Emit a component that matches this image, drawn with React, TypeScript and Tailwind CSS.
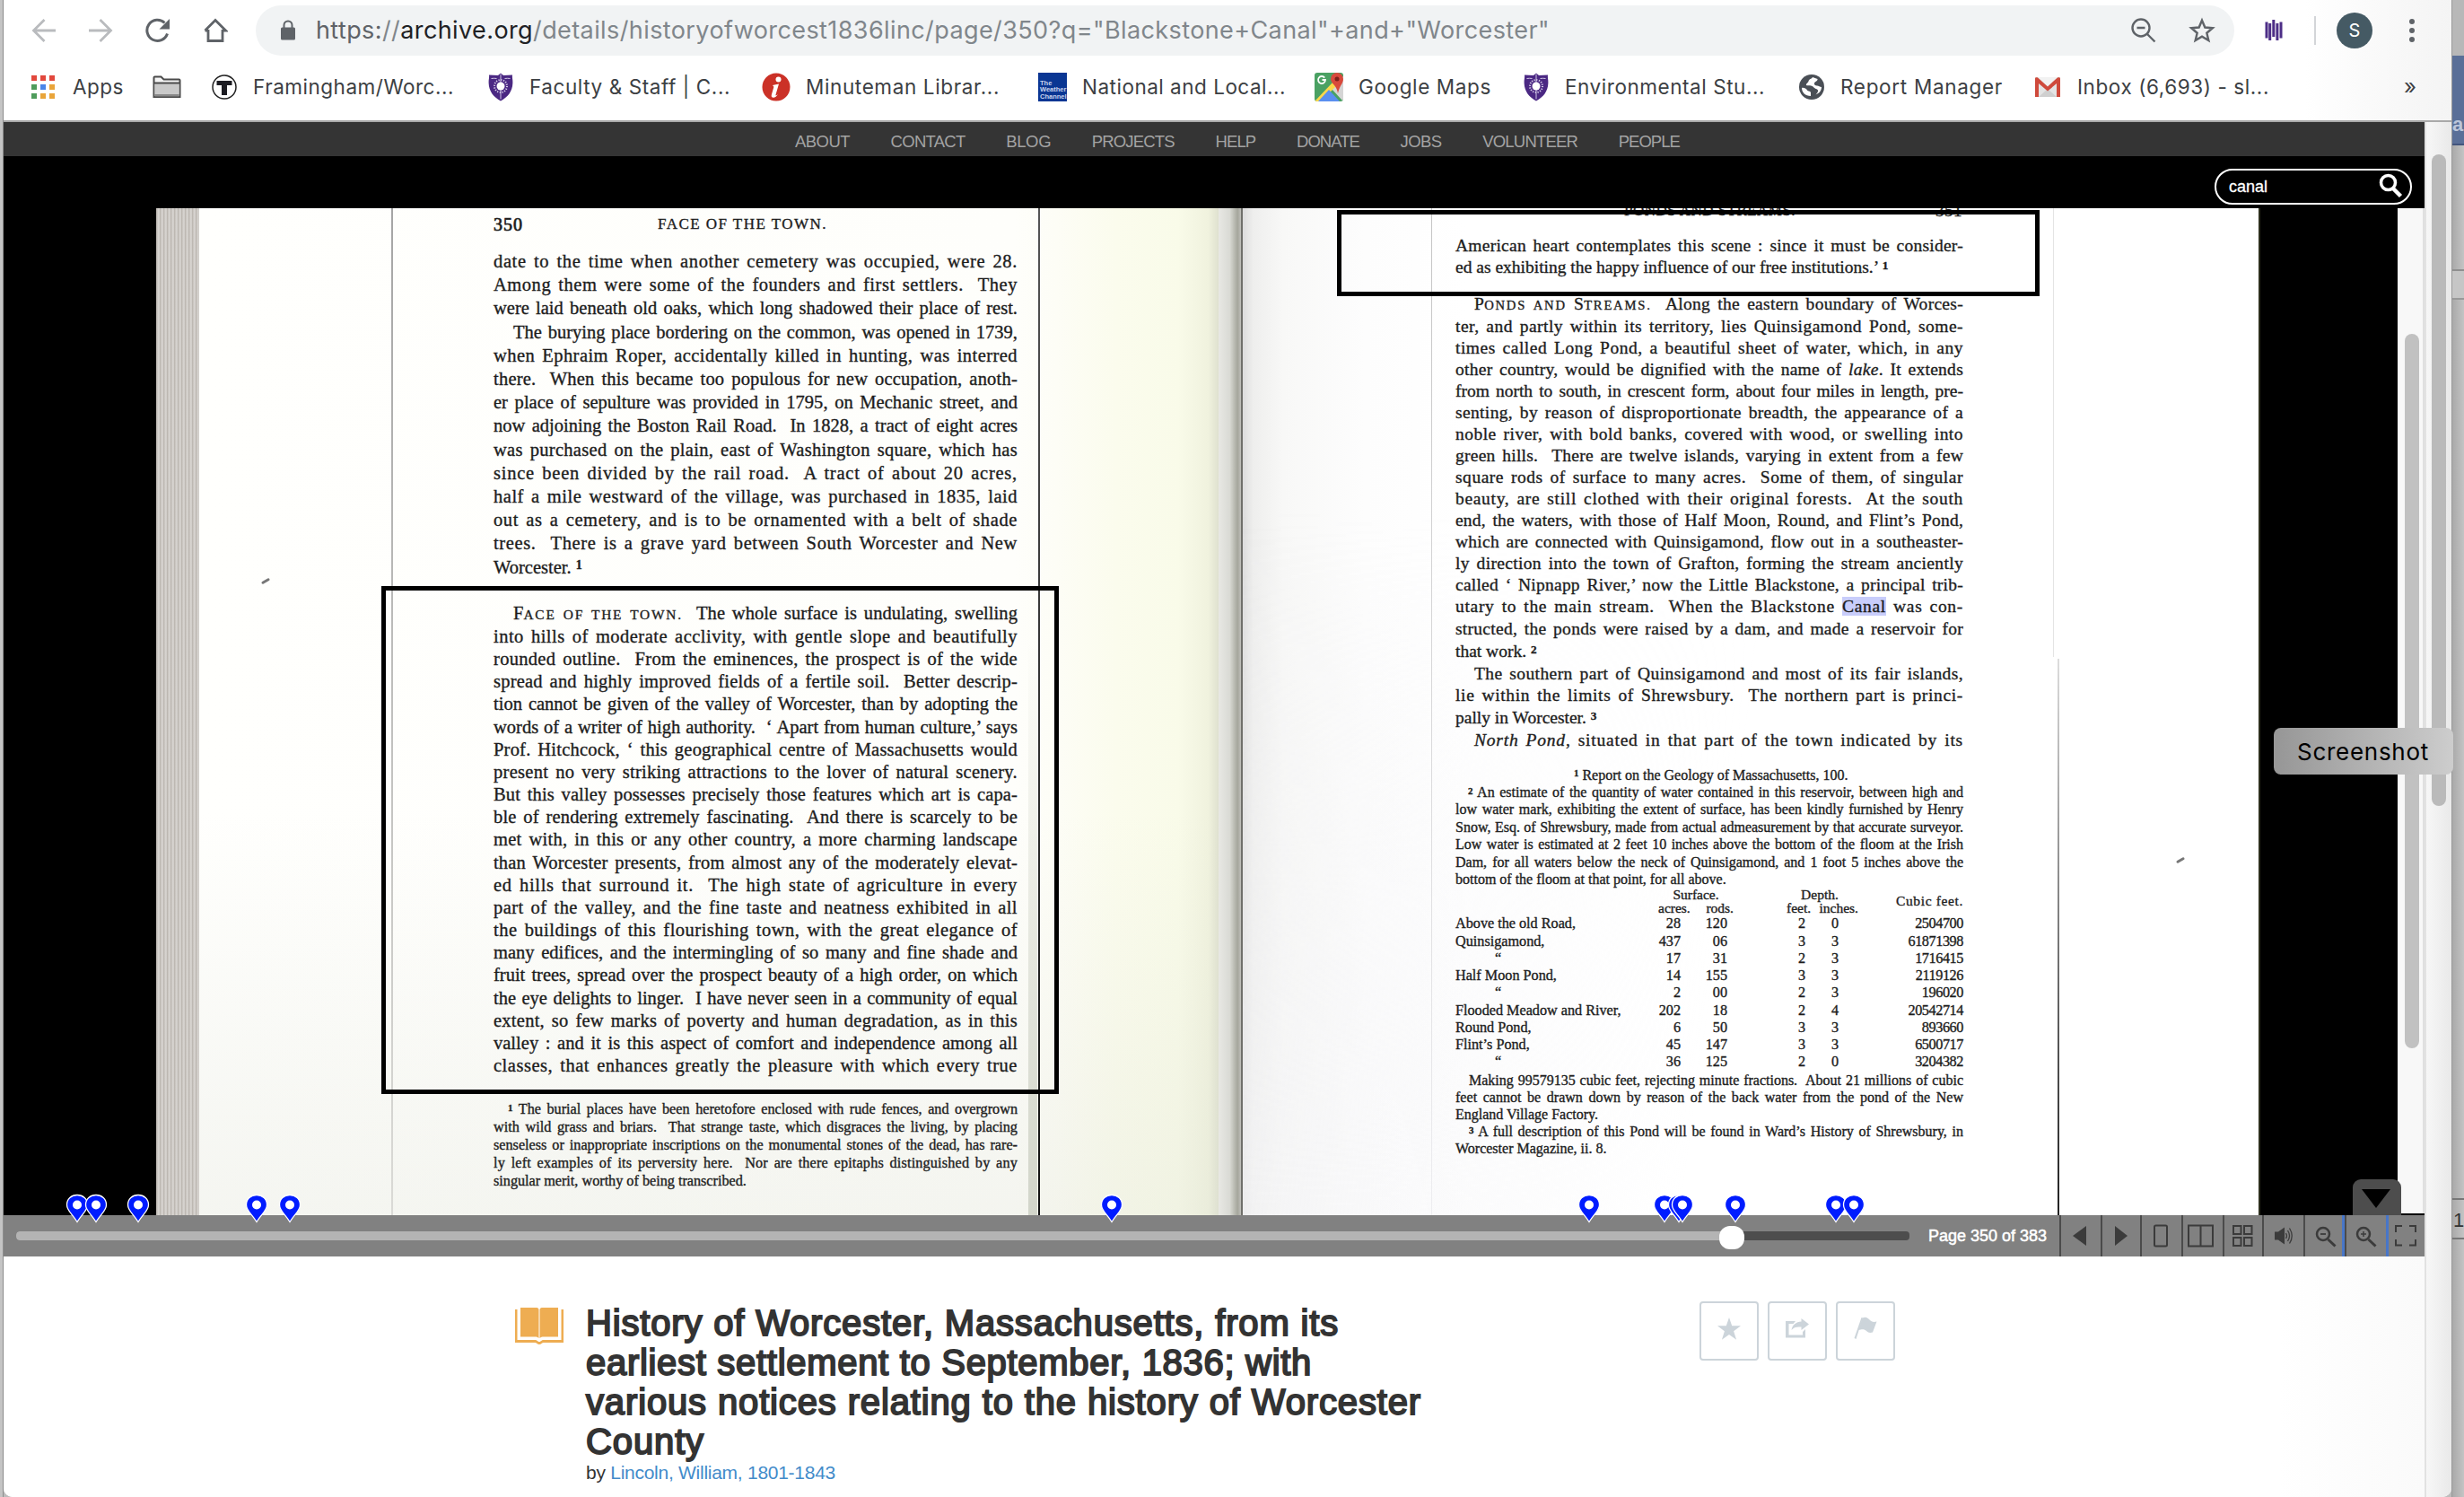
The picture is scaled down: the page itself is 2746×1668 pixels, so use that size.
import { useLayoutEffect, useRef } from "react";
import type { ReactNode } from "react";
import clsx from "clsx";

/* Text whose tracking is adjusted so that it fills a given width. */
function Fit({ w, className, children }: { w: number; className?: string; children: ReactNode }) {
  const ref = useRef<HTMLSpanElement>(null);
  useLayoutEffect(() => {
    const el = ref.current;
    if (!el) return;
    el.style.letterSpacing = "0px";
    const natural = el.getBoundingClientRect().width;
    const n = (el.textContent || "").length;
    el.style.letterSpacing = `${(w - natural) / n}px`;
  });
  return (
    <span className={clsx("inline-block whitespace-pre", className)} ref={ref}>
      {children}
    </span>
  );
}

/* One line of letterpress text, justified to its column. */
function Line({ children, indent = 0, ragged = false }: { children: ReactNode; indent?: number; ragged?: boolean }) {
  const box = useRef<HTMLDivElement>(null);
  const txt = useRef<HTMLSpanElement>(null);
  useLayoutEffect(() => {
    const b = box.current;
    const t = txt.current;
    if (!b || !t || ragged) return;
    b.style.textAlignLast = "left";
    t.style.letterSpacing = "0px";
    const natural = t.getBoundingClientRect().width;
    const width = b.clientWidth - indent;
    const s = t.textContent || "";
    const gaps = (s.match(/[ \u00a0]/g) || []).length;
    const extra = width - natural;
    const ls = extra < 0 ? extra / s.length - 0.01 : Math.min(0.8, Math.max(0, (extra - gaps * 2.5) / s.length));
    t.style.letterSpacing = `${ls}px`;
    b.style.textAlignLast = "justify";
  });
  return (
    <div ref={box} className="w-full whitespace-nowrap text-justify" style={{ paddingLeft: indent }}>
      <span ref={txt}>{children}</span>
    </div>
  );
}

type L = [ReactNode, number?, boolean?];
const Lines = ({ lines }: { lines: L[] }) => (
  <>
    {lines.map((l, i) => (
      <Line key={i} indent={l[1]} ragged={l[2]}>
        {l[0]}
      </Line>
    ))}
  </>
);

const G = "\u00a0 ";

const cemetery: L[] = [
  ["date to the time when another cemetery was occupied, were 28."],
  [`Among them were some of the founders and first settlers.${G}They`],
  ["were laid beneath old oaks, which long shadowed their place of rest."],
  ["The burying place bordering on the common, was opened in 1739,", 22],
  ["when Ephraim Roper, accidentally killed in hunting, was interred"],
  [`there.${G}When this became too populous for new occupation, anoth-`],
  ["er place of sepulture was provided in 1795, on Mechanic street, and"],
  [`now adjoining the Boston Rail Road.${G}In 1828, a tract of eight acres`],
  ["was purchased on the plain, east of Washington square, which has"],
  [`since been divided by the rail road.${G}A tract of about 20 acres,`],
  ["half a mile westward of the village, was purchased in 1835, laid"],
  ["out as a cemetery, and is to be ornamented with a belt of shade"],
  [`trees.${G}There is a grave yard between South Worcester and New`],
  [<>Worcester. <Sup>1</Sup></>, 0, true],
];

const faceOfTown: L[] = [
  [<>F<Cap>ACE OF THE TOWN.</Cap>{G}The whole surface is undulating, swelling</>, 22],
  ["into hills of moderate acclivity, with gentle slope and beautifully"],
  [`rounded outline.${G}From the eminences, the prospect is of the wide`],
  [`spread and highly improved fields of a fertile soil.${G}Better descrip-`],
  ["tion cannot be given of the valley of Worcester, than by adopting the"],
  [`words of a writer of high authority.${G}‘ Apart from human culture,’ says`],
  ["Prof. Hitchcock, ‘ this geographical centre of Massachusetts would"],
  ["present no very striking attractions to the lover of natural scenery."],
  ["But this valley possesses precisely those features which art is capa-"],
  [`ble of rendering extremely fascinating.${G}And there is scarcely to be`],
  ["met with, in this or any other country, a more charming landscape"],
  ["than Worcester presents, from almost any of the moderately elevat-"],
  [`ed hills that surround it.${G}The high state of agriculture in every`],
  ["part of the valley, and the fine taste and neatness exhibited in all"],
  ["the buildings of this flourishing town, with the great elegance of"],
  ["many edifices, and the intermingling of so many and fine shade and"],
  ["fruit trees, spread over the prospect beauty of a high order, on which"],
  [`the eye delights to linger.${G}I have never seen in a community of equal`],
  ["extent, so few marks of poverty and human degradation, as in this"],
  ["valley : and it is this aspect of comfort and independence among all"],
  ["classes, that enhances greatly the pleasure with which every true"],
];

const leftNote: L[] = [
  [<><Sup>1</Sup> The burial places have been heretofore enclosed with rude fences, and overgrown</>, 16],
  [`with wild grass and briars.${G}That strange taste, which disgraces the living, by placing`],
  ["senseless or inappropriate inscriptions on the monumental stones of the dead, has rare-"],
  [`ly left examples of its perversity here.${G}Nor are there epitaphs distinguished by any`],
  ["singular merit, worthy of being transcribed.", 0, true],
];

const heart: L[] = [
  ["American heart contemplates this scene : since it must be consider-"],
  [<>ed as exhibiting the happy influence of our free institutions.’ <Sup>1</Sup></>, 0, true],
];

const ponds: L[] = [
  [<>P<Cap>ONDS AND</Cap> S<Cap>TREAMS.</Cap>{G}Along the eastern boundary of Worces-</>, 21],
  ["ter, and partly within its territory, lies Quinsigamond Pond, some-"],
  ["times called Long Pond, a beautiful sheet of water, which, in any"],
  [<>other country, would be dignified with the name of <i>lake</i>. It extends</>],
  ["from north to south, in crescent form, about four miles in length, pre-"],
  ["senting, by reason of disproportionate breadth, the appearance of a"],
  ["noble river, with bold banks, covered with wood, or swelling into"],
  [`green hills.${G}There are twelve islands, varying in extent from a few`],
  [`square rods of surface to many acres.${G}Some of them, of singular`],
  [`beauty, are still clothed with their original forests.${G}At the south`],
  ["end, the waters, with those of Half Moon, Round, and Flint’s Pond,"],
  ["which are connected with Quinsigamond, flow out in a southeaster-"],
  ["ly direction into the town of Grafton, forming the stream anciently"],
  ["called ‘ Nipnapp River,’ now the Little Blackstone, a principal trib-"],
  [<>utary to the main stream.{G}When the Blackstone <span className="bg-[#c8cdfb]">Canal</span> was con-</>],
];

const pondsEnd: L[] = [
  ["structed, the ponds were raised by a dam, and made a reservoir for"],
  [<>that work. <Sup>2</Sup></>, 0, true],
  ["The southern part of Quinsigamond and most of its fair islands,", 21],
  [`lie within the limits of Shrewsbury.${G}The northern part is princi-`],
  [<>pally in Worcester. <Sup>3</Sup></>, 0, true],
  [<><i>North Pond</i>, situated in that part of the town indicated by its</>, 21],
];

const rightNote: L[] = [
  [<><Sup>1</Sup> Report on the Geology of Massachusetts, 100.</>, 132, true],
  [<><Sup>2</Sup> An estimate of the quantity of water contained in this reservoir, between high and</>, 14],
  ["low water mark, exhibiting the extent of surface, has been kindly furnished by Henry"],
  ["Snow, Esq. of Shrewsbury, made from actual admeasurement by that accurate surveyor."],
  ["Low water is estimated at 2 feet 10 inches above the bottom of the floom at the Irish"],
  ["Dam, for all waters below the neck of Quinsigamond, and 1 foot 5 inches above the"],
  ["bottom of the floom at that point, for all above.", 0, true],
];

const rightEnd: L[] = [
  [`Making 99579135 cubic feet, rejecting minute fractions.${G}About 21 millions of cubic`, 15],
  ["feet cannot be drawn down by reason of the back water from the pond of the New"],
  ["England Village Factory.", 0, true],
  [<><Sup>3</Sup> A full description of this Pond will be found in Ward’s History of Shrewsbury, in</>, 15],
  ["Worcester Magazine, ii. 8.", 0, true],
];

const table = [
  ["Above the old Road,", "28", "120", "2", "0", "2504700"],
  ["Quinsigamond,", "437", "06", "3", "3", "61871398"],
  ["“", "17", "31", "2", "3", "1716415"],
  ["Half Moon Pond,", "14", "155", "3", "3", "2119126"],
  ["“", "2", "00", "2", "3", "196020"],
  ["Flooded Meadow and River,", "202", "18", "2", "4", "20542714"],
  ["Round Pond,", "6", "50", "3", "3", "893660"],
  ["Flint’s Pond,", "45", "147", "3", "3", "6500717"],
  ["“", "36", "125", "2", "0", "3204382"],
];

function Sup({ children }: { children: ReactNode }) {
  return <span className="relative -top-[0.3em] text-[0.68em] font-bold leading-none">{children}</span>;
}
function Cap({ children }: { children: ReactNode }) {
  return <span className="text-[0.75em] tracking-[1.8px]">{children}</span>;
}

function LeftPage() {
  return (
    <div className="relative h-full w-[1136px] shrink-0 overflow-hidden bg-[linear-gradient(90deg,#fffffd_0%,#fefefb_80%,#fdfdf6_84%,#fbfced_90%,#f9fbe9_96%,#f0f2de_99%,#dfe1cf_100%)]">
      <div className="absolute inset-0 bg-linear-to-b from-transparent from-60% to-[#dcdfd4]/30" />
      <div className="absolute left-[214px] top-0 h-full w-[2px] bg-linear-to-b from-[#a5a5a5] to-[#dadad6]" />
      <div className="absolute left-[935px] top-0 h-full w-[2px] bg-linear-to-b from-[#555] to-[#111]" />
      <div className="absolute bottom-0 left-[924px] h-[640px] w-[10px] bg-linear-to-b from-transparent to-[#d2d5ca]" />
      <div className="absolute left-[69px] top-[414px] h-[3px] w-[10px] -rotate-30 rounded-full bg-[#777]" />
      <div className="absolute left-[203px] top-[421px] z-10 h-[566px] w-[755px] border-[5px] border-black" />
      <div className="relative ml-[328px] flex w-[584px] flex-col">
        <div className="flex pt-[6px] leading-[24px]">
          <Fit w={33} className="text-[20px] [-webkit-text-stroke:0.7px_#1d1d1d]">350</Fit>
          <Fit w={189} className="ml-[150px] text-[17px]">FACE OF THE TOWN.</Fit>
        </div>
        <div className="mt-[16px] text-[20.500px] leading-[26.2px]"><Lines lines={cemetery} /></div>
        <div className="mt-[26px] text-[20.500px] leading-[25.16px]"><Lines lines={faceOfTown} /></div>
        <div className="mt-[26px] text-[16.200px] leading-[20px]"><Lines lines={leftNote} /></div>
      </div>
    </div>
  );
}

function RightPage() {
  return (
    <div className="relative h-full w-[1134px] shrink-0 overflow-hidden border-r-2 border-[#2b2d1c] bg-[linear-gradient(90deg,#dcdcdc_0%,#eeeeed_1%,#f8f8f7_4%,#fdfdfd_12%,#ffffff_22%)]">
      <div className="absolute inset-0 bg-[linear-gradient(98deg,rgba(222,222,224,.9),rgba(242,242,243,.8)_6%,rgba(246,246,248,.6)_24%,rgba(255,255,255,0)_50%)] [mask-image:linear-gradient(180deg,transparent_30%,black)]" />
      <div className="absolute left-[210px] top-0 h-full w-[1px] bg-linear-to-b from-[#c4c4c4] to-[#ededf0]" />
      <div className="absolute left-[903px] top-0 h-[500px] w-[1px] bg-[#e4e4e4]" />
      <div className="absolute bottom-0 left-[908px] h-[620px] w-[2px] bg-linear-to-b from-[#ddd] to-[#222]" />
      <div className="absolute left-[1040px] top-[725px] h-[3px] w-[10px] -rotate-30 rounded-full bg-[#777]" />
      <div className="absolute left-[105px] top-[2px] z-10 h-[96px] w-[783px] border-[5px] border-black" />
      <div className="relative ml-[237px] flex w-[566px] flex-col">
        <div className="-mt-[9px] flex leading-[24px]">
          <Fit w={191} className="ml-[188px] text-[17px]">PONDS AND STREAMS.</Fit>
          <Fit w={30} className="ml-[156px] text-[19px]">351</Fit>
        </div>
        <div className="mt-[15px] text-[19.500px] leading-[24.3px]"><Lines lines={heart} /></div>
        <div className="mt-[16px] text-[19.500px] leading-[24.05px]"><Lines lines={ponds} /></div>
        <div className="mt-[1px] text-[19.500px] leading-[24.7px]"><Lines lines={pondsEnd} /></div>
        <div className="mt-[16px] text-[16px] leading-[19.4px]"><Lines lines={rightNote} /></div>
        <div className="flex h-[31px] text-[15.500px] leading-[15px]">
          <div className="ml-[226px] w-[84px] text-center"><div>Surface.</div><div className="flex justify-between"><span>acres.</span><span>rods.</span></div></div>
          <div className="ml-[59px] w-[80px] text-center"><div className="pr-[6px]">Depth.</div><div className="flex justify-between"><span>feet.</span><span>inches.</span></div></div>
          <div className="grow pt-[7px] text-right"><Fit w={75}>Cubic feet.</Fit></div>
        </div>
        <div className="text-[16.200px] leading-[19.27px]">
          {table.map((r, i) => (
            <div key={i} className="flex whitespace-nowrap">
              <span className={clsx("w-[190px]", r[0] === "“" && "pl-[44px]")}>{r[0]}</span>
              <span className="w-[61px] text-right">{r[1]}</span>
              <span className="w-[52px] text-right">{r[2]}</span>
              <span className="w-[87px] text-right">{r[3]}</span>
              <span className="w-[37px] text-right">{r[4]}</span>
              <span className="grow text-right tracking-[-0.400px]">{r[5]}</span>
            </div>
          ))}
        </div>
        <div className="text-[16px] leading-[19px]"><Lines lines={rightEnd} /></div>
      </div>
    </div>
  );
}

const Shield = () => (
  <svg width="28" height="32" viewBox="0 0 28 32">
    <path d="M14 .5 17 3l10-.5c-.5 3 .6 5 .4 9C27 21 22 27 14 31.500 6 27 1 21 .6 11.500.4 7.500 1.500 5.500 1 2.500L11 3z" fill="#4b2883" />
    <path d="M14 1.500v28" stroke="#cfc4e4" strokeWidth="1" />
    <path d="M3.500 6.500q3-.5 6 0M18.500 6.500q3-.5 6 0" stroke="#cfc4e4" strokeWidth="1" fill="none" />
    <circle cx="14" cy="15" r="7" fill="none" stroke="#d9d0ea" strokeWidth="2" strokeDasharray="1.200 1.550" />
    <circle cx="14" cy="15" r="4.500" fill="#fff" />
  </svg>
);

const bookmarks: { icon: ReactNode; iw: number; gap: number; label: string; w: number; after: number }[] = [
  {
    icon: (
      <svg width="28" height="28" viewBox="0 0 28 28">
        <circle cx="14" cy="14" r="13" fill="#fff" stroke="#222" strokeWidth="1.500" />
        <path d="M5.500 7h17v5H17v11h-6V12H5.500z" fill="#1c1c22" />
      </svg>
    ), iw: 28, gap: 18, label: "Framingham/Worc...", w: 224, after: 38,
  },
  { icon: <Shield />, iw: 28, gap: 18, label: "Faculty & Staff | C...", w: 224, after: 35 },
  {
    icon: (
      <svg width="32" height="32" viewBox="0 0 32 32">
        <circle cx="16" cy="16" r="15.500" fill="#cb3127" />
        <circle cx="18.500" cy="7.500" r="3" fill="#fff" />
        <path d="m12 14 7-1.500-3.500 12c-.3 1.500.8 1 2.500-.7-1.500 3-3.500 4.200-5.500 4-2-.3-2-2-1.500-3.800l2.400-8.300z" fill="#fff" />
      </svg>
    ), iw: 32, gap: 17, label: "Minuteman Librar...", w: 216, after: 43,
  },
  {
    icon: (
      <div className="flex h-8 w-8 flex-col justify-end bg-[#0a3693] pb-[2px] pl-[2px] font-['Liberation_Sans'] text-[7.500px] font-bold leading-[7.500px] text-[#c9d4ee]">
        <span>The</span><span>Weather</span><span>Channel</span>
      </div>
    ), iw: 32, gap: 17, label: "National and Local...", w: 227, after: 32,
  },
  {
    icon: (
      <svg width="32" height="32" viewBox="0 0 32 32">
        <defs><clipPath id="gm"><rect width="32" height="32" rx="3" /></clipPath></defs>
        <g clipPath="url(#gm)">
          <path d="M0 0h32v32H0z" fill="#4aa163" />
          <path d="M32 4v28L18 17z" fill="#d5d5d5" />
          <path d="M0 32 20 11l4 4L7 32z" fill="#fbd84b" />
          <path d="M4 32 16 19l12 13z" fill="#5a8ff0" />
          <path d="M18 7a7 7 0 0 1 14 0c0 5-4 7-6 16-1-9-8-11-8-16z" fill="#d8493c" />
        </g>
        <circle cx="25" cy="7" r="2.500" fill="#7c211a" />
        <path d="M11.200 5.600a4 4 0 1 0 .8 2.400H8.500" fill="none" stroke="#fff" strokeWidth="1.800" />
      </svg>
    ), iw: 32, gap: 17, label: "Google Maps", w: 148, after: 36,
  },
  { icon: <Shield />, iw: 28, gap: 18, label: "Environmental Stu...", w: 223, after: 38 },
  {
    icon: (
      <svg width="28" height="28" viewBox="0 0 28 28">
        <circle cx="14" cy="14" r="14" fill="#4a4f56" />
        <path d="M3 15c2-.5 5 .5 6 2.500 1 1.500 4 .5 4 3v3.500C7 24 3 20 3 15zM15 3c-1 2-4 2-4.500 4.500C10 9.500 7.500 10 8 12c2 1 6-.5 8 2s4 1.500 5 3.500c.5 1.500-1 3.500-2.500 5 4-1.500 6.500-4.500 6.500-8.500-2 0-3-1.500-5-1.500s-3.500-1-3-3c.5-1.500 3-2 3.500-3.500V5z" fill="#fff" />
      </svg>
    ), iw: 28, gap: 18, label: "Report Manager", w: 181, after: 36,
  },
  {
    icon: (
      <svg width="28" height="22" viewBox="0 0 28 22">
        <path d="M0 0h28v22H0z" fill="#e4e4e4" />
        <path d="m4 22 10-9 10 9z" fill="#cfcfcf" />
        <path d="M3 0h22L14 10z" fill="#f2f2f2" />
        <path d="M0 1.500V22h4V7l10 8.500L24 7v15h4V1.500C28 0 26 0 25 .5L14 10.500 3 .5C2 0 0 0 0 1.500z" fill="#cf4a3c" />
      </svg>
    ), iw: 28, gap: 19, label: "Inbox (6,693) - sl...", w: 214, after: 0,
  },
];

function Chrome() {
  return (
    <div className="flex h-[136px] shrink-0 flex-col border-b-2 border-[#a9a9a9] bg-[linear-gradient(90deg,#fff_94%,#f4f4f4_100%)] font-[Inter]">
      <div className="flex h-[62px] items-center pl-[31px] pt-[6px]">
        <svg width="28" height="28" viewBox="0 0 28 28" fill="none" stroke="#b9bbbe" strokeWidth="2.800"><path d="M27 14H3M14.500 2 2.500 14l12 12" /></svg>
        <svg className="ml-[35px]" width="28" height="28" viewBox="0 0 28 28" fill="none" stroke="#b9bbbe" strokeWidth="2.800"><path d="M1 14h24M13.500 2l12 12-12 12" /></svg>
        <svg className="ml-[35px]" width="30" height="28" viewBox="0 0 30 28"><path d="M25.500 17.500A11.600 11.600 0 1 1 22.500 5.500" fill="none" stroke="#5f6368" strokeWidth="3" /><path d="M28 1v11.500H16.500z" fill="#5f6368" /></svg>
        <svg className="ml-[35px]" width="28" height="28" viewBox="0 0 28 28" fill="none" stroke="#5f6368" strokeWidth="2.800"><path d="M6 13v12.500h16V13M2.500 14 14 2.500 25.500 14H22M2.500 14H6" /></svg>
        <div className="ml-[31px] flex h-[56px] w-[2205px] items-center rounded-full bg-[#f1f3f4] pl-[27px] pr-[20px]">
          <svg width="18" height="24" viewBox="0 0 18 24"><rect x="1" y="8.500" width="16" height="14" rx="1.500" fill="#5f6368" /><path d="M4.500 9V6a4.500 4.500 0 0 1 9 0v3" fill="none" stroke="#5f6368" strokeWidth="2" /></svg>
          <Fit w={1375} className="ml-[22px] text-[27px] leading-[40px] text-[#80868b]"><span className="text-[#5f6368]">https:</span>//<span className="text-[#202124]">archive.org</span>/details/historyofworcest1836linc/page/350?q="Blackstone+Canal"+and+"Worcester"</Fit>
          <svg className="ml-auto" width="30" height="30" viewBox="0 0 30 30" fill="none" stroke="#5f6368" strokeWidth="2.400"><circle cx="12" cy="12" r="9.500" /><path d="M7.500 12h9M19 19l8.500 8.500" /></svg>
          <svg className="ml-[34px]" width="32" height="32" viewBox="0 0 24 24" fill="none" stroke="#5f6368" strokeWidth="1.800"><path d="m12 3.500 2.500 5.900 6.400.5-4.900 4.200 1.500 6.200L12 17l-5.500 3.300L8 14.100 3.100 9.900l6.400-.5z" /></svg>
        </div>
        <svg className="ml-[34px]" width="20" height="24" viewBox="0 0 20 24" stroke="#4d2e87" strokeWidth="3"><path d="M2 2.500v18M5.700 4v19M9.800 0v19M13.900 4v19M18 2.500v18" /></svg>
        <div className="ml-[35px] h-[32px] w-[2px] bg-[#d3d5d8]" />
        <div className="ml-[23px] flex h-[40px] w-[40px] items-center justify-center rounded-full bg-[#455a64] text-[20px] text-white">S</div>
        <div className="ml-[40px] flex flex-col gap-1 pl-[1px]">
          <div className="h-[6px] w-[6px] rounded-full bg-[#5f6368]" /><div className="h-[6px] w-[6px] rounded-full bg-[#5f6368]" /><div className="h-[6px] w-[6px] rounded-full bg-[#5f6368]" />
        </div>
      </div>
      <div className="flex h-[70px] items-center pl-[31px] text-[22.500px] leading-[32px] text-[#3c4043]">
        <div className="grid grid-cols-[6px_6px_6px] gap-[4px]">
          {["bg-[#e2483d]", "bg-[#e2483d]", "bg-[#e2483d]", "bg-[#4f9c5c]", "bg-[#4a86e8]", "bg-[#e9a53a]", "bg-[#4f9c5c]", "bg-[#e9a53a]", "bg-[#e9a53a]"].map((c, i) => (
            <div key={i} className={clsx("h-[6px] w-[6px]", c)} />
          ))}
        </div>
        <Fit w={57} className="ml-[20px]">Apps</Fit>
        <svg className="ml-[32px]" width="32" height="26" viewBox="0 0 32 26"><path d="M1.500 24V2.500Q1.500 1.500 2.500 1.500h7l3 3h17q1 0 1 1V24z" fill="#f4f4f4" stroke="#4b4b4b" strokeWidth="2" /><path d="M2.500 9h27v12h-27z" fill="#c9c9c9" /><path d="M1.500 8.500h29" stroke="#4b4b4b" strokeWidth="2" /><path d="M2.500 21h27v2.500h-27z" fill="#888" /></svg>
        <div className="ml-[34px] flex items-center">
          {bookmarks.map((b, i) => (
            <div key={i} className="flex items-center" style={{ marginRight: b.after }}>
              <div className="shrink-0" style={{ width: b.iw, marginRight: b.gap }}>{b.icon}</div>
              <div style={{ width: b.w }}><Fit w={b.w}>{b.label}</Fit></div>
            </div>
          ))}
        </div>
        <span className="ml-auto mr-[39px] text-[24px]">»</span>
      </div>
    </div>
  );
}

const nav: [string, number][] = [["ABOUT", 61], ["CONTACT", 83], ["BLOG", 50], ["PROJECTS", 92], ["HELP", 45], ["DONATE", 70], ["JOBS", 46], ["VOLUNTEER", 106], ["PEOPLE", 68]];

const pins = [86, 107, 154, 286, 323, 1239, 1771, 1855, 1871, 1875, 1934, 2046, 2066];

const cells: { w: number; active?: boolean; icon: ReactNode }[] = [
  { w: 46, icon: <path d="M30 12v22L15 23z" fill="#3b3b3b" stroke="none" /> },
  { w: 44, icon: <path d="M16 12v22l14-11z" fill="#3b3b3b" stroke="none" /> },
  { w: 46, icon: <rect x="16" y="11.500" width="14" height="23" rx="1.500" /> },
  { w: 46, icon: <path d="M8 11.500h27v23H8zM21.500 11.500v23" /> },
  { w: 44, icon: <path d="M12 12h8.500v9H12zM24 12h8.500v9H24zM12 25h8.500v9H12zM24 25h8.500v9H24z" /> },
  { w: 46, icon: <><path d="M14 18.500h4l7-5v19l-7-5h-4z" fill="#3b3b3b" stroke="none" /><path d="M26.500 20q2 3 0 6M28.500 17q4 6 0 12M30.500 14.500q5.500 8.500 0 17" strokeWidth="1.300" /></> },
  { w: 46, icon: <><circle cx="22" cy="21" r="7" strokeWidth="2.500" /><path d="m27.500 27 8 7.500" strokeWidth="3" /><path d="M19 21h6" strokeWidth="1.800" /></> },
  { w: 46, active: true, icon: <><circle cx="21" cy="21" r="7" strokeWidth="2.500" /><path d="m26.500 27 8 7.500" strokeWidth="3" /><path d="M18 21h6M21 18v6" strokeWidth="1.500" /></> },
  { w: 43, icon: <path d="M11 19v-7h7M26 12h7v7M11 27v6.500h7M26 33.500h7V27" /> },
];

function ReaderBar() {
  return (
    <div className="relative flex h-[46px] shrink-0 items-stretch bg-[#818181]">
      <div className="relative ml-[14px] mt-[18px] h-[10px] w-[2110px] shrink-0 overflow-hidden rounded-[4px] bg-[#4d4d4d]">
        <div className="h-full w-[1912px] bg-[#b4b4b4]" />
      </div>
      <div className="ml-[21px] pt-[1px] text-[18px] leading-[44px] text-white [-webkit-text-stroke:0.5px_white]"><Fit w={132}>Page 350 of 383</Fit></div>
      <div className="ml-auto flex">
        {cells.map((c, i) => (
          <div key={i} className={clsx("border-l-2 border-[#4b4b4b]", c.active && "relative z-10 shadow-[-3px_0_0_#4876c8,3px_0_0_#4876c8]")} style={{ width: c.w }}>
            <svg className="-ml-[2px]" width="44" height="46" viewBox="0 0 44 46" fill="none" stroke="#3b3b3b" strokeWidth="2">{c.icon}</svg>
          </div>
        ))}
      </div>
      <div className="absolute left-[1912px] top-[12px] h-[26px] w-[28px] rounded-[12px] bg-white" />
      {pins.map((x) => (
        <svg key={x} className="absolute -top-[24px]" style={{ left: x - 17 }} width="26" height="33" viewBox="0 0 26 33">
          <path d="M13 1.500C6.500 1.500 1.500 6 1.500 12.500 1.500 19 7 22 13 31.500 19 22 24.500 19 24.500 12.500 24.500 6 19.500 1.500 13 1.500z" fill="#001cff" stroke="#fff" strokeWidth="1.300" />
          <circle cx="13" cy="12.500" r="5" fill="#fff" />
        </svg>
      ))}
      <div className="absolute -top-[40px] left-[2618px] flex h-[40px] w-[54px] justify-center rounded-t-[9px] bg-[#4d4d4d] pt-[11px]">
        <svg className="-ml-[2px]" width="32" height="21" viewBox="0 0 32 21"><path d="M0 0h32L16 21z" fill="#000" /></svg>
      </div>
    </div>
  );
}

function Details() {
  const box = "flex h-[66px] w-[66px] items-center justify-center rounded-[4px] border-2 border-[#ccd4da] pb-[6px]";
  return (
    <div className="flex grow bg-[linear-gradient(90deg,#fff_94%,#fafafa_100%)]">
      <svg className="ml-[570px] mt-[57px] shrink-0" width="54" height="41" viewBox="0 0 54 41" fill="#eead52">
        <path d="M6 0h18c1.500 0 2.500 1 2.500 2.500V34C25 32.500 24 32.500 22 32.500H6zM48 0H30c-1.500 0-2.500 1-2.500 2.500V34c1.500-1.500 2.500-1.500 4.500-1.500h16z" />
        <path d="M0 2h2.500v34H22c3 0 3 2 5 2s2-2 5-2h19.500V2H54v37H32c-2 0-3 2-5 2s-3-2-5-2H0z" />
      </svg>
      <div className="ml-[25px] mt-[52px] flex flex-col text-[40px] leading-[44px] text-[#333] [-webkit-text-stroke:1.900px_#333]">
        <div><Fit w={839}>History of Worcester, Massachusetts, from its</Fit></div>
        <div><Fit w={809}>earliest settlement to September, 1836; with</Fit></div>
        <div><Fit w={931}>various notices relating to the history of Worcester</Fit></div>
        <div><Fit w={132}>County</Fit></div>
        <div className="mt-[0px] text-[21px] leading-[26px] [-webkit-text-stroke:0px]">
          <Fit w={278}>by <span className="text-[#428bca]">Lincoln, William, 1801-1843</span></Fit>
        </div>
      </div>
      <div className="ml-[310px] mt-[50px] flex gap-[10px]">
        <div className={box}><svg width="26" height="25" viewBox="0 0 26 25"><path d="m13 0 3.200 9.300H26l-7.900 5.900 3 9.600L13 19l-8.100 5.800 3-9.600L0 9.300h9.800z" fill="#ccd4da" /></svg></div>
        <div className={box}><svg width="26" height="22" viewBox="0 0 26 22" fill="#ccd4da"><path d="M0 3h11L8.500 6H3.500v12.500H19V15l3-3v9.500H0z" /><path d="M17.500 0 26 6.500 17.500 13V9.500C12 9 9 10 6.500 13 7.500 7 11.500 4 17.500 3.500z" /></svg></div>
        <div className={box}><svg width="26" height="26" viewBox="0 0 26 26" fill="#ccd4da"><path d="M8.500 1 10 1.500 2.500 25 .5 24z" /><path d="M9.500 1.500c4-2 6 0 8 2s4 3 8 2L21 17.500c-3 1-5 .5-7-1.500s-4-2.500-9-1z" /></svg></div>
      </div>
    </div>
  );
}

export default function App() {
  return (
    <div className="relative flex h-[1668px] w-[2746px] overflow-hidden bg-[#bdbdbd] font-['Liberation_Sans',sans-serif]">
      <div className="w-[4px] shrink-0 border-r border-[#8d8d8d] bg-[#c4c4c4]" />
      <div className="flex w-[2728px] shrink-0 flex-col overflow-hidden rounded-b-[10px] bg-white">
        <Chrome />
        <div className="flex min-h-0 grow">
          <div className="flex w-[2698px] shrink-0 flex-col">
            <div className="flex h-[38px] shrink-0 items-center gap-[45.600px] bg-[#343434] pl-[882px] pt-[5px] text-[18.500px] leading-[24px] text-[#a3a3a3]">
              {nav.map(([t, w]) => (
                <div key={t} style={{ width: w }}><Fit w={w}>{t}</Fit></div>
              ))}
            </div>
            <div className="flex h-[58px] shrink-0 justify-end bg-black pr-[14px] pt-[14px]">
              <div className="flex h-[40px] w-[220px] items-center justify-between rounded-full border-2 border-white pl-[14px] pr-[8px] text-[18px] text-white">
                <Fit w={43} className="[-webkit-text-stroke:0.3px_white]">canal</Fit>
                <svg className="mb-[3px]" width="27" height="28" viewBox="0 0 27 28" fill="none" stroke="#fff"><circle cx="10.500" cy="10.500" r="8" strokeWidth="3.500" /><path d="m16 17 8.500 8.500" strokeWidth="4.500" /></svg>
              </div>
            </div>
            <div className="flex h-[1122px] shrink-0 bg-black">
              <div className="relative flex w-[2668px] shrink-0 font-['Liberation_Serif',serif] text-[#1d1d1d] [-webkit-text-stroke:0.350px_#1d1d1d]">
                <div className="ml-[170px] w-[48px] shrink-0 bg-[repeating-linear-gradient(90deg,#bdb8b2_0px,#bdb8b2_1px,#d8d5d1_2px,#d0ccc8_4px)]" />
                <LeftPage />
                <div className="w-[25px] shrink-0 bg-[linear-gradient(90deg,#e8e8e4,#d9dad4_50%,#a5a69c_85%,#c0c0bb_100%)]" />
                <div className="w-[2px] shrink-0 bg-[#6f6f6a]" />
                <RightPage />
              </div>
              <div className="flex h-[1120px] w-[30px] flex-col border-r-2 border-[#e0e0e0] bg-[#f8f8f8] pl-[8px] pt-[140px]">
                <div className="h-[796px] w-[16px] rounded-full bg-[#c1c1c1]" />
              </div>
            </div>
            <ReaderBar />
            <Details />
          </div>
          <div className="w-[30px] shrink-0 border-l-2 border-[#e2e2e2] bg-linear-to-r from-[#f7f7f7] to-[#e9e9e9] pl-[6px] pt-[36px]">
            <div className="h-[726px] w-[16px] rounded-full bg-[#bababa]" />
          </div>
        </div>
      </div>
      <div className="flex w-[14px] shrink-0 flex-col overflow-hidden border-l border-[#9a9a9a] bg-linear-to-r from-[#a9a9a9] to-[#c4c4c4] text-[22px]">
        <div className="h-[62px] bg-[#b8b8b8]" />
        <div className="flex h-[100px] items-end border-b-2 border-[#43557d] bg-[#5a6f98] pb-[8px] font-bold leading-[26px] text-[#bcc6da]">ar</div>
        <div className="h-[140px] border-b-2 border-[#8f8f8f]" />
        <div className="h-[32px] border-b-2 border-[#999] bg-[#c6c6c6]" />
        <div className="mt-[1001px] h-[46px] border-y-2 border-[#777] pl-[1px] leading-[46px] text-[#333]">1</div>
      </div>
      <div className="absolute left-[2534px] top-[811px] z-20 flex h-[52px] w-[200px] items-center rounded-[8px] bg-linear-to-r from-[#969696] to-[#cdcdcd] pl-[26px] font-[Inter] text-[26px] text-black">
        <Fit w={147}>Screenshot</Fit>
      </div>
    </div>
  );
}
